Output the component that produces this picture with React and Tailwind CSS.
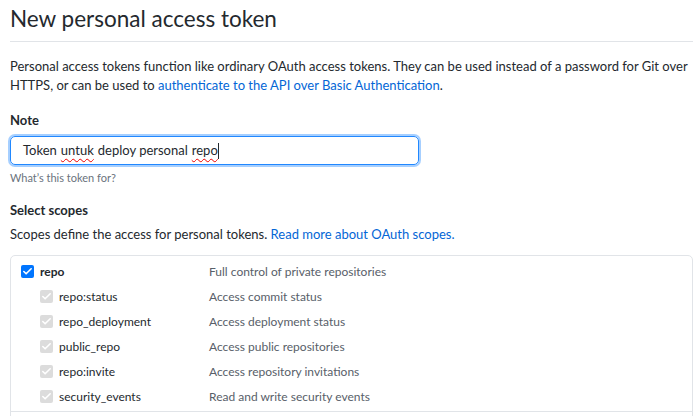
import { Check } from 'lucide-react';

const scopes = [
  { name: 'repo:status', desc: 'Access commit status' },
  { name: 'repo_deployment', desc: 'Access deployment status' },
  { name: 'public_repo', desc: 'Access public repositories' },
  { name: 'repo:invite', desc: 'Access repository invitations' },
  { name: 'security_events', desc: 'Read and write security events' },
];

const Box = ({ checked, disabled }) => (
  <span
    className={`w-[13px] h-[13px] rounded-[2px] flex items-center justify-center shrink-0 ${
      disabled ? 'bg-[#dcdcdc]' : 'bg-[#0075ff]'
    }`}
  >
    {checked && <Check className="w-[11px] h-[11px]" strokeWidth={3.5} color="#fff" />}
  </span>
);

const App = () => {
  return (
    <div className="w-[700px] h-[416px] overflow-hidden bg-white text-[#24292e] px-[10px] pt-[4px]" style={{ fontFamily: 'Lato, "Noto Sans", sans-serif' }}>
      <h1 className="text-[22.5px] leading-[30px] font-normal pb-[7px] border-b border-[#e1e4e8] w-[683px]">New personal access token</h1>

      <p className="text-[13px] leading-[19px] mt-[15px]">
        Personal access tokens function like ordinary OAuth access tokens. They can be used instead of a password for Git over HTTPS, or can be used to{' '}
        <span className="text-[#0366d6]">authenticate to the API over Basic Authentication</span>.
      </p>

      <div className="mt-[15px]">
        <div className="text-[13px] font-bold leading-[20px]">Note</div>
        <div className="mt-[6px] w-[409px] h-[29px] rounded-[5px] border border-[#2188ff] ring-[2px] ring-[#2188ff]/40 flex items-center px-[12px] text-[13px]">
          Token <span className="underline decoration-wavy decoration-[#e00] decoration-[1px] underline-offset-[3px] mx-[4px]">untuk</span> deploy personal{' '}
          <span className="underline decoration-wavy decoration-[#e00] decoration-[1px] underline-offset-[3px] ml-[4px]">repo</span>
          <span className="w-px h-[16px] bg-[#24292e]" />
        </div>
        <div className="text-[11px] text-[#6a737d] mt-[5px] leading-[16px]">What’s this token for?</div>
      </div>

      <div className="mt-[14px]">
        <div className="text-[13px] font-bold leading-[20px]">Select scopes</div>
        <p className="text-[13px] leading-[19px] mt-[5px]">
          Scopes define the access for personal tokens. <span className="text-[#0366d6]">Read more about OAuth scopes.</span>
        </p>
      </div>

      <div className="mt-[11px] w-[683px] border border-[#e1e4e8] rounded-[5px] text-[12px]">
        <div className="px-[10px] pt-[3px] pb-[2px]">
          <div className="flex items-center h-[25px]">
            <div className="w-[188px] flex items-center gap-[6px] font-bold">
              <Box checked />
              repo
            </div>
            <div className="text-[#586069]">Full control of private repositories</div>
          </div>
          {scopes.map((s) => (
            <div key={s.name} className="flex items-center h-[25px]">
              <div className="w-[188px] flex items-center gap-[6px] pl-[19px]">
                <Box checked disabled />
                {s.name}
              </div>
              <div className="text-[#586069]">{s.desc}</div>
            </div>
          ))}
        </div>
        <div className="border-t border-[#e1e4e8] h-[20px]" />
      </div>
    </div>
  );
};

export default App;
